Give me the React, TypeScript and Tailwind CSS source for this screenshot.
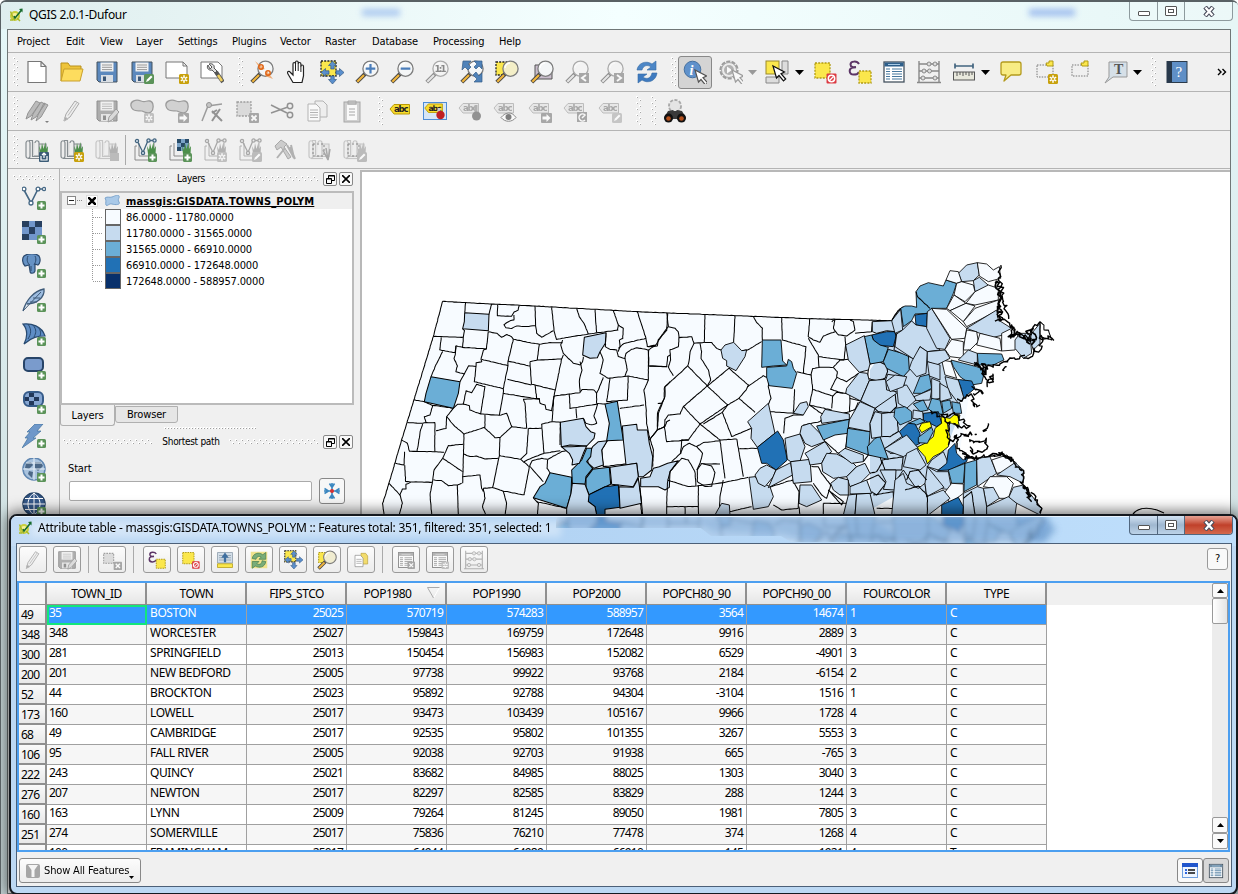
import React from "react";

const N = "#f7fbff";
const L = "#c6dbef";
const M = "#6baed6";
const D = "#2171b5";
const Y = "#ffff00";

const UI = "[font-family:'DejaVu_Sans_Condensed','DejaVu_Sans',sans-serif] [font-stretch:semi-condensed] text-[11px] leading-[14px] tracking-[-0.15px] whitespace-pre";

/* ---------- icon parts ---------- */

type IconProps = { children: React.ReactNode; dim?: boolean; size?: number };
function Ic({ children, dim, size = 24 }: IconProps) {
  return (
    <svg width={size} height={size} viewBox="0 0 24 24" fill="none" className={dim ? "shrink-0 grayscale opacity-60" : "shrink-0"}>
      {children}
    </svg>
  );
}

const Plus = () => (
  <g>
    <rect x="15" y="15" width="9" height="9" rx="1.5" fill="#5b9359" />
    <path d="M19.5 16.5v6M16.5 19.5h6" stroke="#fff" strokeWidth="2" />
  </g>
);
const Star = () => (
  <g>
    <rect x="14" y="14" width="10" height="10" rx="1.5" fill="#c8a10c" />
    <path d="M19 15.3v7.4M15.8 17.2l6.4 3.6M22.2 17.2l-6.4 3.6" stroke="#fff" strokeWidth="1.5" />
    <circle cx="19" cy="19" r="1.1" fill="#c8a10c" />
  </g>
);
const Cross = () => (
  <g>
    <rect x="14" y="14" width="10" height="10" rx="1" fill="#777" />
    <path d="M16.5 16.5l5 5M21.5 16.5l-5 5" stroke="#fff" strokeWidth="1.8" />
  </g>
);
const Arr = () => (
  <g>
    <rect x="13" y="14" width="11" height="10" rx="1" fill="#777" />
    <path d="M14.5 17.5h4v-2.5l4 4-4 4v-2.5h-4z" fill="#fff" />
  </g>
);
const Edit = ({ c = "#5b9359" }: { c?: string }) => (
  <g>
    <rect x="14" y="14" width="10" height="10" rx="1.5" fill={c} />
    <path d="M16 22l1-2.500 4-4 1.500 1.500-4 4z" fill="#fff" />
  </g>
);
const Mag = ({ fill = "#f4f6f7", handle = "#f2b63c" }: { fill?: string; handle?: string }) => (
  <g>
    <path d="M10.500 13.500L1.800 22.200" stroke="#444" strokeWidth="4" />
    <path d="M9 15L2.300 21.700" stroke={handle} strokeWidth="2.200" />
    <circle cx="15.500" cy="8.700" r="7.600" fill={fill} stroke="#7d7d7d" strokeWidth="1.300" />
    <path d="M10 8a5.500 5.500 0 0 1 5-5" stroke="#fff" strokeWidth="1.500" />
  </g>
);
const Cursor = ({ x = 10, y = 9, c = "#111" }: { x?: number; y?: number; c?: string }) => (
  <path transform={`translate(${x} ${y})`} d="M0 0l3.500 12 2.500-2.500 4.500 5.500 2.200-2-4.700-5.300 3.500-1.700z" fill="#fff" stroke={c} strokeWidth="1.200" />
);
const Floppy = () => (
  <g>
    <path d="M2 2h20v20H4l-2-2z" fill="#5b88bd" stroke="#44525f" />
    <rect x="5.500" y="2.500" width="13" height="9" fill="#f1f1f1" />
    <path d="M7 5h10M7 7.300h10M7 9.600h10" stroke="#999" />
    <rect x="6" y="15" width="12" height="7" fill="#d9dee4" />
    <rect x="8" y="16.500" width="3" height="4.500" fill="#3b5777" />
  </g>
);
const Blob = () => <path d="M1 7C0 2 6 0 11 2s5-1 9 0 4 9 1 11-7 0-9-1-10 2-11-5z" fill="#bdbdbd" stroke="#666" strokeWidth="1.300" />;
const Tag = ({ y = false }: { y?: boolean }) => (
  <g>
    <path d="M2 10l4-4.500h15.500v9.500H6z" fill={y ? "#f7dc2c" : "#e2e2e2"} stroke={y ? "#b99a06" : "#9a9a9a"} />
    <text x="6" y="13" fontSize="8.500" fontWeight="700" fontFamily="DejaVu Sans" textLength="14.500" fill={y ? "#222" : "#777"}>abc</text>
  </g>
);
const Frames = ({ dim }: { dim?: boolean }) => (
  <g stroke={dim ? "#aaa" : "#858c90"} strokeWidth="1.200">
    <path d="M4 2.500h3.500v16H21V6h-7" fill="#e0e0e0" />
    <path d="M1 5c0-3 4-3 4 0v13c0 3-4 3-4 0zM10 5c0-3 4-3 4 0v13H9" fill="#ededed" />
    <path d="M3 20.500h12" />
  </g>
);
const Grass = ({ c = "#4c8f4a" }: { c?: string }) => (
  <path d="M15 16l-1-8 2 4 1-7 1.500 6 2-7 .5 7 2-3-.5 8z" fill={c} />
);
const Layer = ({ children }: { children?: React.ReactNode }) => (
  <g>
    <path d="M6 5v13h15V5M4 8H2v14h14" stroke="#8a8a8a" />
    {children}
  </g>
);
const Vee = ({ c = "#42647f" }: { c?: string }) => (
  <g stroke={c} strokeWidth="1.300">
    <path d="M5 4.500l5 10 5-12M16.500 2.500h4" />
    <g fill="#dfe9f2">
      <circle cx="4" cy="3" r="1.600" />
      <circle cx="10" cy="15" r="1.600" />
      <circle cx="15.500" cy="2.500" r="1.600" />
      <circle cx="21.500" cy="2.500" r="1.600" />
    </g>
  </g>
);
const Dotted = ({ x = 1, y = 3, s = 15, f = "#fbe74c", c = "#b19b14" }: { x?: number; y?: number; s?: number; f?: string; c?: string }) => (
  <rect x={x} y={y} width={s} height={s} fill={f} stroke={c} strokeWidth="1.300" strokeDasharray="2 1.200" />
);
const Deny = () => (
  <g>
    <rect x="13.500" y="13.500" width="10" height="10" rx="1" fill="#dc3a42" />
    <circle cx="18.500" cy="18.500" r="3.200" stroke="#fff" strokeWidth="1.500" />
    <path d="M20.500 16.500l-4 4" stroke="#fff" strokeWidth="1.300" />
  </g>
);
const Abacus = () => (
  <g stroke="#888">
    <path d="M2 1v21M22 1v21M0 22.500h24M2 4h20M2 11h20M2 18h20" strokeWidth="1.400" />
    <g fill="#ddd">
      <circle cx="12" cy="4" r="2" /><circle cx="18" cy="4" r="2" />
      <circle cx="7" cy="11" r="2" /><circle cx="12.500" cy="11" r="2" />
      <circle cx="6" cy="18" r="2" /><circle cx="18" cy="18" r="2" />
    </g>
  </g>
);
const Eps = () => <path d="M11 4C9 .500 2.500 1 2.500 4.500c0 2.500 3 3 5.500 2.700-3 0-6.500.500-6.300 4 .300 4.500 7.300 4.300 9.300.7" stroke="#5c3566" strokeWidth="2" />;
const Note = () => <path d="M4 2h16q2 0 2 2v9q0 2-2 2h-8l-7 6 2-6H4q-2 0-2-2V4q0-2 2-2z" fill="#f8ec84" stroke="#b39a1d" strokeWidth="1.300" strokeLinejoin="round" />;
const Arrows4 = ({ cx = 12, cy = 12 }: { cx?: number; cy?: number }) => (
  <g transform={`translate(${cx} ${cy})`} fill="#5a8fcd" stroke="#375a85" strokeWidth=".7">
    {[0, 90, 180, 270].map((r) => (
      <path key={r} transform={`rotate(${r})`} d="M-1.700-3.500v-3.500h-2.300L0-11.500 4-7h-2.300v3.500z" />
    ))}
  </g>
);
const Docs = () => (
  <g stroke="#8b8b8b" fill="#eee">
    <path d="M10 2h8l4 4v12H10z" />
    <path d="M3 5h8l4 4v13H3z" fill="#fff" />
    <path d="M5 11h8M5 13.500h8M5 16h8M5 18.500h8" />
  </g>
);
const Pencil = () => (
  <g>
    <path d="M4 22l2-7L15 2l4 2.500L10 18z" fill="#ececec" stroke="#777" />
    <path d="M8 16.500L17 3.500M4 22l1-4 3 2z" stroke="#999" fill="#777" />
  </g>
);
const TableGlyph = ({ c = "#2d5f8b" }: { c?: string }) => (
  <g>
    <rect x="2" y="2" width="20" height="20" fill="#fff" stroke="#44525f" strokeWidth="1.300" />
    <path d="M2.500 4.500h19" stroke={c} strokeWidth="4" />
    <path d="M6 4.500h12" stroke="#a9cbe6" />
    <path d="M4 9h4M10 9h10M4 11.500h4M10 11.500h10M4 14h4M10 14h10M4 16.500h4M10 16.500h10M4 19h4M10 19h10" stroke="#47789e" strokeWidth="1.200" />
  </g>
);
const Hammer = () => (
  <g>
    <path d="M2 8l6-6 6 4-3 3 7 10-3 2L8 9l-4 3z" fill="#b5b5b5" stroke="#777" />
    <path d="M12 10L4 20M14 7l7 13M18 7l3 13M17 9l5 12" stroke="#888" strokeWidth="2" />
  </g>
);

function Logo() {
  return (
    <svg width="14" height="14" viewBox="0 0 14 14" fill="none" className="shrink-0">
      <circle cx="6" cy="8" r="4" fill="#f6f09a" stroke="#c9cf3d" strokeWidth="2" />
      <path d="M1.500 3.500l4 9M8 10l3 3M1 12h3" stroke="#a9b92a" strokeWidth="1.500" />
      <path d="M5 8l1 2 7-8.500" stroke="#176b2d" strokeWidth="1.600" />
      <path d="M13.500.5V4.500L10 1z" fill="#176b2d" />
    </svg>
  );
}

/* ---------- toolbar helpers ---------- */

function Grip() {
  return (
    <svg width="6" height="30" viewBox="0 0 6 30" className="shrink-0">
      {Array.from({ length: 10 }, (_, i) => (
        <g key={i}>
          <rect x={i % 2 ? 3 : 0} y={i * 3} width="2" height="2" fill="#fff" />
          <rect x={i % 2 ? 4 : 1} y={i * 3 + 1} width="1" height="1" fill="#a8a8a8" />
        </g>
      ))}
    </svg>
  );
}
function HGrip({ n, flat = false }: { n: number; flat?: boolean }) {
  return (
    <svg width={n * 3} height="6" className="shrink-0">
      {Array.from({ length: n }, (_, i) => (
        <g key={i}>
          <rect x={i * 3} y={!flat && i % 2 ? 3 : 0} width="2" height="2" fill="#fff" />
          <rect x={i * 3 + 1} y={!flat && i % 2 ? 4 : 1} width="1" height="1" fill="#a0a0a0" />
        </g>
      ))}
    </svg>
  );
}
function Slot({ children, w = "w-[35px]" }: { children?: React.ReactNode; w?: string }) {
  return <div className={`${w} flex h-[34px] shrink-0 items-center justify-center`}>{children}</div>;
}
function Down({ dim = false }: { dim?: boolean }) {
  return (
    <svg width="9" height="5" className="shrink-0">
      <path d="M0 0h9L4.500 5z" fill={dim ? "#999" : "#000"} />
    </svg>
  );
}

function Toolbar1() {
  return (
    <div className="flex h-[39px] items-center border-b border-[#b4b4b4] pl-[5px]">
      <Grip />
      <Slot><Ic><path d="M3 1.500h13l5 5v16H3zM16 1.500v5h5" fill="#fff" stroke="#777" strokeWidth="1.200" /></Ic></Slot>
      <Slot><Ic><path d="M1 21V3h7l2 3h11v4" fill="#eec43b" stroke="#b8901a" /><path d="M1 21L4 9h19l-3 12z" fill="#fddc5e" stroke="#c9a02c" /></Ic></Slot>
      <Slot><Ic><Floppy /></Ic></Slot>
      <Slot><Ic><Floppy /><Edit /></Ic></Slot>
      <Slot><Ic><path d="M1 2h17l4 4v12H1zM18 2v4h4" fill="#fff" stroke="#777" /><Star /></Ic></Slot>
      <Slot><Ic><path d="M1 2h17l4 4v12H1z" fill="#fff" stroke="#777" /><path d="M8 5c-2 3 1 6 4 5l3 3 2-2-3-3c1-3-2-5-5-4l3 3-2 2z" fill="#ddd" stroke="#555" /><path d="M16 12l7 10" stroke="#555" strokeWidth="4" /><path d="M18 15l4 6" stroke="#f0d060" strokeWidth="2.500" /></Ic></Slot>
      <div className="ml-[9px] flex"><Grip /></div>
      <Slot><Ic><Mag /><path d="M5 1l10 8-4 1zM23 19l-8-3 2-5z" fill="#f0a060" opacity=".8" /><circle cx="11" cy="7" r="2.200" stroke="#e06414" strokeWidth="1.500" /><circle cx="18" cy="13" r="2.200" stroke="#e06414" strokeWidth="1.500" /></Ic></Slot>
      <Slot><Ic><path d="M8 22.500L3 14c-1.500-2.500 1-3.500 2.500-1.500L8 15V4c0-2 2.500-2 2.500 0V2.500c0-2 2.700-2 2.700 0V4c0-2 2.700-2 2.700 0v2.500c0-2 2.600-2 2.600 0V16l-1.500 6.500z" fill="#fff" stroke="#222" strokeWidth="1.200" /><path d="M10.500 4v7M13.200 4v7M15.900 6v6" stroke="#222" /></Ic></Slot>
      <Slot><Ic><Dotted x={1} y={1} s={15} c="#222" /><Arrows4 cx={12.500} cy={12.500} /></Ic></Slot>
      <Slot><Ic><Mag /><path d="M15.500 4v9.500M10.700 8.700h9.600" stroke="#4a7dba" strokeWidth="2.200" /></Ic></Slot>
      <Slot><Ic><Mag /><path d="M10.700 8.700h9.600" stroke="#4a7dba" strokeWidth="2.200" /></Ic></Slot>
      <Slot><Ic dim><Mag handle="#ddd" /><text x="9.500" y="12" fontSize="9" fontWeight="700" fontFamily="DejaVu Sans" textLength="12" fill="#444">1:1</text></Ic></Slot>
      <Slot><Ic><Mag /><path d="M3 1h8L8 4l3 3-3 3-3-3-3 3zM22 1v8l-3-3-3 3-2-2 3-3-3-3zM22 22h-8l3-3-4-4 3-3 3 4 3-3z" fill="#4f82b9" stroke="#355d88" strokeWidth=".7" /></Ic></Slot>
      <Slot><Ic><Dotted x={1} y={2} s={13} c="#222" /><Mag fill="#f4efc8" /></Ic></Slot>
      <Slot><Ic><path d="M5 5h17v14H5z" fill="#c9bdcc" stroke="#555" /><Mag /></Ic></Slot>
      <Slot><Ic dim><Mag handle="#ddd" /><rect x="14" y="13" width="10" height="10" fill="#777" /><path d="M21 15l-4 3 4 3" stroke="#fff" strokeWidth="2" /></Ic></Slot>
      <Slot><Ic dim><Mag handle="#ddd" /><rect x="14" y="13" width="10" height="10" fill="#777" /><path d="M17 15l4 3-4 3" stroke="#fff" strokeWidth="2" /></Ic></Slot>
      <Slot><Ic><path d="M2 10C3 3 11 0 17 4l4-3v9h-9l4-3c-4-3-8-1-9 3z" fill="#4d87c7" stroke="#386ca5" strokeWidth=".6" /><path d="M22 13c-1 8-9 11-15 7l-4 3v-9h9l-4 3c4 3 8 1 9-4z" fill="#3f7bc0" stroke="#386ca5" strokeWidth=".6" /></Ic></Slot>
      <div className="ml-[7px] mr-px flex"><Grip /></div>
      <div className="flex h-[33px] w-[34px] shrink-0 items-center justify-center rounded-[3px] border border-[#888] bg-[#d4d4d4]">
        <Ic><circle cx="9.500" cy="9.500" r="8.300" fill="#5f91cb" stroke="#436f9f" /><text x="6.500" y="15" fontSize="14" fontStyle="italic" fontWeight="700" fontFamily="Liberation Serif" fill="#fff">i</text><Cursor x={12} y={10} c="#555" /></Ic>
      </div>
      <div className="ml-[2px] flex"><Slot w="w-[34px]"><Ic dim><circle cx="10" cy="10" r="8.500" fill="#e8e8e8" stroke="#666" strokeWidth="2.200" strokeDasharray="4 1.300" /><circle cx="10" cy="10" r="7.500" fill="#e8e8e8" stroke="#777" /><circle cx="10" cy="10" r="5" fill="#888" /><path d="M8 6.500l5 3.500-5 3.500z" fill="#fff" /><Cursor x={13} y={10} c="#666" /></Ic></Slot></div>
      <Down dim />
      <div className="ml-[7px] flex"><Slot w="w-[26px]"><Ic><rect x="1" y="1" width="13" height="13" fill="#fbe74c" stroke="#9b8a2a" /><path d="M17 1h6v13h-6zM1 17h13v6H1z" fill="#ddd" stroke="#888" /><Cursor x={8} y={6} /></Ic></Slot></div>
      <div className="ml-[5px] flex"><Down /></div>
      <div className="ml-[3px] flex"><Slot><Ic><Dotted x={2} y={3} s={15} /><Deny /></Ic></Slot></div>
      <Slot><Ic><Eps /><Dotted x={11} y={11} s={12} /></Ic></Slot>
      <div className="ml-[-1px] flex"><Slot><Ic><TableGlyph /></Ic></Slot></div>
      <Slot><Ic><Abacus /></Ic></Slot>
      <Slot><Ic><path d="M3 6h18M3 3.500v5M21 3.500v5" stroke="#42647f" strokeWidth="1.700" /><rect x="1.500" y="12" width="21" height="8" fill="#e8e8dc" stroke="#555" /><path d="M5 12v4M8 12v3M11 12v4M14 12v3M17 12v4M20 12v3" stroke="#555" /></Ic></Slot>
      <Down />
      <div className="ml-[3px] flex"><Slot><Ic><Note /></Ic></Slot></div>
      <Slot><Ic><rect x="3" y="5" width="16" height="12" stroke="#777" strokeDasharray="1.500 1.200" /><path d="M12 3h3V1h4v5h-6z" fill="#fbe74c" stroke="#b19b14" /><Star /></Ic></Slot>
      <Slot><Ic><rect x="3" y="5" width="16" height="11" stroke="#777" strokeDasharray="1.500 1.200" /><path d="M12 3h3V1h4v5h-6z" fill="#fbe74c" stroke="#b19b14" /></Ic></Slot>
      <Slot><Ic><path d="M5 2h18v15H9l-8 6 4-6z" fill="#d6e0e8" stroke="#999" /><text x="10" y="14" fontSize="14" fontWeight="700" fontFamily="Liberation Serif" fill="#555">T</text></Ic></Slot>
      <Down />
      <div className="ml-[9px] mr-[2px] flex"><Grip /></div>
      <Slot w="w-[35px]"><Ic><rect x="2" y="1.500" width="20" height="21" fill="#5f8fc6" stroke="#2b3a4a" /><path d="M2 1.500h5v21H2z" fill="#28394c" /><text x="10.500" y="17" fontSize="15" fontFamily="Liberation Serif" fill="#fff">?</text></Ic></Slot>
      <svg width="10" height="10" viewBox="0 0 10 10" className="ml-auto mr-[3px] shrink-0"><path d="M1 2l3 3-3 3M5.500 2l3 3-3 3" stroke="#000" strokeWidth="1.400" fill="none" /></svg>
    </div>
  );
}

function Toolbar2() {
  return (
    <div className="flex h-[39px] items-center border-b border-[#b4b4b4] pl-[5px]">
      <Grip />
      <Slot><Ic dim><path d="M1 20l2-6L11 2l4 2-9 13zM6 21l2-6 8-12 4 2-9 13zM11 22l2-6 6-12 4 2-7 12z" fill="#999" stroke="#555" /><path d="M20 22h4l-2 2z" fill="#333" /></Ic></Slot>
      <Slot><Ic dim><Pencil /></Ic></Slot>
      <Slot><Ic dim><Floppy /><path d="M13 23l1-5 7-8 3 3-7 8z" fill="#ccc" stroke="#666" /></Ic></Slot>
      <Slot><Ic dim><Blob /><Star /></Ic></Slot>
      <Slot><Ic dim><Blob /><Arr /></Ic></Slot>
      <Slot><Ic dim><path d="M2 22L8 7l14-2" stroke="#666" strokeWidth="1.500" /><circle cx="9" cy="6" r="2.500" fill="#aaa" stroke="#555" /><path d="M12 12l10 10M20 10l-8 12M12 14l5-3" stroke="#555" strokeWidth="2" /></Ic></Slot>
      <Slot><Ic dim><Dotted x={2} y={3} s={14} f="#ccc" c="#666" /><Cross /></Ic></Slot>
      <Slot><Ic dim><path d="M1 6l16 8M1 14l17-6" stroke="#555" strokeWidth="1.500" /><circle cx="20" cy="7" r="2.700" stroke="#555" strokeWidth="1.500" /><circle cx="20" cy="16" r="2.700" stroke="#555" strokeWidth="1.500" /></Ic></Slot>
      <Slot><Ic dim><Docs /></Ic></Slot>
      <Slot><Ic dim><rect x="4" y="3" width="16" height="20" fill="#bbb" stroke="#777" /><rect x="7" y="6" width="10" height="15" fill="#fff" /><path d="M8 2h8v3H8zM9 10h6M9 13h6M9 16h6" stroke="#777" /></Ic></Slot>
      <div className="ml-[9px] mr-[-2px] flex"><Grip /></div>
      <Slot><Ic><Tag y /></Ic></Slot>
      <Slot>
        <Ic><rect x=".5" y="3.500" width="23" height="17" fill="#d7e6f6" stroke="#4d8cd6" /><g transform="translate(0 0) scale(.9)"><Tag y /></g><path d="M16 9v6" stroke="#ccc" strokeWidth="3" /><circle cx="17.500" cy="16" r="4.200" fill="#c01f24" /></Ic>
      </Slot>
      <Slot><Ic dim><g transform="translate(-1 -1)"><Tag /></g><path d="M18 6v8" stroke="#888" strokeWidth="3" /><circle cx="18.500" cy="17" r="4.500" fill="#555" /></Ic></Slot>
      <Slot><Ic dim><g transform="translate(-1 -1)"><Tag /></g><path d="M8 18.500c5-6 11-6 15 0-4 5-11 5-15 0z" fill="#fff" stroke="#444" /><circle cx="15.500" cy="18" r="3" fill="#333" /></Ic></Slot>
      <Slot><Ic dim><g transform="translate(-1 -1)"><Tag /></g><Arr /></Ic></Slot>
      <Slot><Ic dim><g transform="translate(-1 -1)"><Tag /></g><rect x="14" y="13" width="10" height="10" fill="#777" /><path d="M22 21a3.500 3.500 0 1 1 0-5l-3 3" stroke="#fff" strokeWidth="1.500" /></Ic></Slot>
      <Slot><Ic dim><g transform="translate(-1 -1)"><Tag /></g><Edit c="#aaa" /></Ic></Slot>
      <div className="ml-[9px] flex"><Grip /></div>
      <div className="ml-[9px] flex"><Grip /></div>
      <Slot>
        <Ic><circle cx="12" cy="7" r="6" fill="#ddd" stroke="#aaa" strokeWidth="2" strokeDasharray="3 1.500" /><circle cx="12" cy="7" r="5" fill="#e4e4e4" /><path d="M5 12l5-1 1 1h2l1-1 5 1 4 7-4 4-5-3h-4l-5 3-4-4z" fill="#3a3a3a" /><circle cx="5.500" cy="19" r="4.500" fill="#111" /><circle cx="18.500" cy="19" r="4.500" fill="#111" /><circle cx="5.500" cy="19.500" r="2.300" fill="#b5511c" /><circle cx="18.500" cy="19.500" r="2.300" fill="#b5511c" /></Ic>
      </Slot>
    </div>
  );
}

function Toolbar3() {
  return (
    <div className="flex h-[38px] items-center border-b border-[#b4b4b4] pl-[5px]">
      <Grip />
      <Slot><Ic><Frames /><Grass /><rect x="14" y="14" width="10" height="10" rx="1" fill="#3b5c77" /><path d="M16 18v4h6v-4M19 20v-5M17 17l2-2 2 2" stroke="#fff" strokeWidth="1.200" /></Ic></Slot>
      <Slot><Ic><Frames /><Grass /><Star /></Ic></Slot>
      <Slot><Ic dim><Frames dim /><Grass c="#888" /><rect x="15" y="15" width="9" height="8" fill="#999" /></Ic></Slot>
      <div className="mx-px h-[30px] w-px shrink-0 bg-[#aaa]" />
      <Slot><Ic><Layer><Vee /><Grass /></Layer><Plus /></Ic></Slot>
      <Slot><Ic><Layer><rect x="9" y="1" width="12" height="12" fill="#7ba3c7" /><path d="M9 1h4v4H9zM17 1h4v4h-4zM13 5h4v4h-4zM9 9h4v4H9z" fill="#284b68" /><Grass /></Layer><Plus /></Ic></Slot>
      <Slot><Ic dim><Layer><Vee c="#777" /><Grass c="#888" /></Layer><Star /></Ic></Slot>
      <Slot><Ic dim><Layer><Vee c="#777" /><Grass c="#888" /></Layer><Edit c="#999" /></Ic></Slot>
      <Slot><Ic dim><Hammer /></Ic></Slot>
      <Slot><Ic dim><Frames dim /><rect x="5" y="6" width="11" height="12" stroke="#444" strokeDasharray="2 2" /><path d="M15 12l5 10M18 10l2 12M22 11l-2 11" stroke="#777" strokeWidth="1.500" /></Ic></Slot>
      <Slot><Ic dim><Frames dim /><rect x="5" y="6" width="11" height="12" stroke="#444" strokeDasharray="2 2" /><Grass c="#999" /><Edit c="#999" /></Ic></Slot>
    </div>
  );
}

function SideBar() {
  const icons: React.ReactNode[] = [
    <g transform="translate(-1 0)" key="v"><path d="M3 4l7 13 7-14h5" stroke="#466885" strokeWidth="1.600" /><g fill="#fff" stroke="#466885" strokeWidth="1.300"><circle cx="3" cy="3" r="1.900" /><circle cx="10" cy="17" r="2" /><circle cx="17" cy="3" r="1.900" /><circle cx="23" cy="3" r="1.600" /></g></g>,
    <g key="r"><rect x="0" y="1" width="20" height="19" fill="#7196cb" /><path d="M0 1h7v6H0zM13 1h7v6h-7zM7 7h6v7H7zM0 14h7v6H0z" fill="#273f5f" /></g>,
    <g key="p"><path d="M2 2c4-3 12-3 15 0 2 3 1 8-1 9l-3-1v7c-1 3-5 3-5 0l-1-6-4 1C0 9 0 4 2 2z" fill="#6692c4" stroke="#2c4a6e" strokeWidth="1.200" /><path d="M6 2c-2 4 0 8 2 9M13 2c2 4 0 7-1 9M9 12v5" stroke="#2c4a6e" /></g>,
    <g key="f"><path d="M1 23C4 12 12 3 22 1c1 8-7 15-17 15" fill="#9dbce0" stroke="#3e5a78" strokeWidth="1.300" /><path d="M1 23L19 4M8 14h7M11 10h7" stroke="#3e5a78" /></g>,
    <g key="m"><path d="M1 2c8-1 19 2 22 12-7 0-13 1-21 8C6 14 6 8 1 2z" fill="#5e8dc5" stroke="#284a70" strokeWidth="1.200" /><path d="M6 2c4 6 3 10 0 15M11 3c4 5 3 8 1 12M16 5c3 4 3 6 2 9" stroke="#284a70" /></g>,
    <rect key="o" x="2" y="2" width="19" height="13" rx="4" fill="#7a9bcc" stroke="#274468" strokeWidth="2" />,
    <g key="q"><rect x="2" y="2" width="19" height="14" rx="5" fill="#86a6d2" stroke="#365b89" strokeWidth="2" /><path d="M7 3h5v4H7zM3 7h4v4H3zM12 7h5v4h-5zM7 11h5v4H7z" fill="#22385a" /></g>,
    <path key="l" d="M13 0h8l-6 7h4l-8 7h3L0 24l6-10H3l5-6H5z" fill="#6e97c9" stroke="#44729f" strokeWidth=".7" />,
    <g key="w"><circle cx="12" cy="11" r="11" fill="#a9c3de" stroke="#5f86b1" strokeWidth="1.500" /><path d="M4 5l5-1 2 3-4 4-4-1zM13 4h6l2 4-5 5-3-3zM7 13l4 1-1 6-4-4zM15 14l3 1-2 4z" fill="#4c6887" /><path d="M1 11h22M12 0v22M4 5h16" stroke="#e6eef6" /></g>,
    <g key="g"><circle cx="12" cy="12" r="11" fill="#36598a" stroke="#274468" strokeWidth="1.500" /><path d="M1 12h22M12 1v22M3 6.500h18M3 17.500h18M12 1c-8 6-8 16 0 22M12 1c8 6 8 16 0 22" stroke="#fff" /></g>,
  ];
  return (
    <div className="flex w-[52px] shrink-0 flex-col items-center border-r border-[#b4b4b4]">
      <div className="mt-[6px] flex h-[6px]"><HGrip n={14} /></div>
      {icons.map((ic, i) => (
        <div key={i} className="flex h-[34px] shrink-0 items-center">
          <Ic>{ic}<Plus /></Ic>
        </div>
      ))}
    </div>
  );
}

function DockTitle({ text, n }: { text: string; n: number }) {
  return (
    <div className="flex h-[16px] shrink-0 items-center pl-[3px]">
      <HGrip n={n} />
      <div className="flex-1 text-center whitespace-pre [font-family:'DejaVu_Sans_Condensed','DejaVu_Sans',sans-serif] [font-stretch:semi-condensed] text-[10px] leading-[14px] tracking-[-0.3px]">{text}</div>
      <HGrip n={n} />
      <div className="ml-[4px] mr-[2px] flex h-[14px] w-[14px] shrink-0 items-center justify-center rounded-[2px] border border-[#888] bg-[#f8f8f8]">
        <svg width="9" height="9" fill="none" stroke="#000"><path d="M2.500 3V.5h6v5H6M2.500 1h6" /><path d="M.5 3.500h5v5h-5zM.5 4h5" /></svg>
      </div>
      <div className="mr-[4px] flex h-[14px] w-[14px] shrink-0 items-center justify-center rounded-[2px] border border-[#888] bg-[#f8f8f8]">
        <svg width="8" height="8" stroke="#000" strokeWidth="1.600"><path d="M0 0l8 8M8 0L0 8" /></svg>
      </div>
    </div>
  );
}

const classes: [string, string][] = [
  ["bg-[#f7fbff]", "86.0000 - 11780.0000"],
  ["bg-[#c6dbef]", "11780.0000 - 31565.0000"],
  ["bg-[#6baed6]", "31565.0000 - 66910.0000"],
  ["bg-[#2171b5]", "66910.0000 - 172648.0000"],
  ["bg-[#08306b]", "172648.0000 - 588957.0000"],
];

function Docks() {
  return (
    <div className="flex w-[297px] shrink-0 flex-col pt-[2px]">
      <DockTitle text="Layers" n={36} />
      <div className="mt-[4px] mr-[3px] h-[214px] shrink-0 border-2 border-[#bbb] bg-white">
        <div className="flex h-[16px] items-center bg-[#efefef] pl-[5px]">
          <svg width="16" height="11" fill="none" stroke="#888"><rect x=".5" y=".5" width="8" height="8" fill="#fff" /><path d="M2 4.500h5" stroke="#222" /><path d="M10 4.500h6" strokeDasharray="1 1" /></svg>
          <div className="ml-[3px] flex h-[12px] w-[12px] items-center justify-center border border-[#ddd] bg-white">
            <svg width="8" height="8" stroke="#000" strokeWidth="2.500"><path d="M0 0l8 8M8 0L0 8" /></svg>
          </div>
          <svg width="16" height="12" viewBox="0 0 16 12" className="ml-[6px]"><path d="M1 3c3-2 4 0 7-1s6-3 7-1-2 3 0 6-4 3-7 2-5 3-6 1 1-4-1-7z" fill="#a9c9e8" stroke="#7ba3cb" /></svg>
          <span className="ml-[6px] whitespace-pre pt-px [font-family:'DejaVu_Sans_Condensed','DejaVu_Sans',sans-serif] [font-stretch:semi-condensed] text-[11px] font-bold leading-[14px] tracking-[0.15px] underline">massgis:GISDATA.TOWNS_POLYM</span>
        </div>
        {classes.map(([bg, label], i) => (
          <div key={label} className="flex h-[16px] items-center pl-[30px]">
            <svg width="11" height="16" stroke="#999" fill="none"><path d={i === 4 ? "M.5 0V8" : "M.5 0V16"} strokeDasharray="1 1" /><path d="M1 8.500h9" strokeDasharray="1 1" /></svg>
            <div className={`${bg} ml-[2px] h-[16px] w-[16px] shrink-0 border border-[#666]`} />
            <span className={`${UI} ml-[5px] pt-px`}>{label}</span>
          </div>
        ))}
      </div>
      <div className="flex h-[21px] shrink-0 items-start">
        <div className={`${UI} flex h-[21px] w-[55px] items-center justify-center rounded-b-[3px] border border-t-0 border-[#b0b0b0] bg-[#f0f0f0] pt-px`}>Layers</div>
        <div className={`${UI} mt-px flex h-[17px] w-[63px] items-center justify-center rounded-b-[3px] border border-[#b0b0b0] bg-[#e6e6e6] pt-px`}>Browser</div>
      </div>
      <div className="flex h-[8px] shrink-0 items-center justify-center pl-[4px]"><HGrip n={31} flat /></div>
      <DockTitle text="Shortest path" n={30} />
      <div className={`${UI} mt-[12px] ml-[8px] h-[14px]`}>Start</div>
      <div className="mt-[2px] flex shrink-0 items-center pl-[9px]">
        <div className="h-[20px] w-[243px] rounded-[2px] border border-[#aaa] bg-white" />
        <div className="ml-[7px] flex h-[26px] w-[26px] items-center justify-center rounded-[3px] border border-[#888] bg-[#f7f7f7]">
          <svg width="16" height="16" stroke="#3b87c0" strokeWidth="1.600"><path d="M8 0v16M0 8h16M5.500.5l2.500 4 2.500-4M5.500 15.500l2.500-4 2.500 4M.5 5.500l4 2.500-4 2.500M15.500 5.500l-4 2.500 4 2.500" fill="none" /><circle cx="8" cy="8" r="2" fill="#d93030" stroke="none" /></svg>
        </div>
      </div>
    </div>
  );
}

/* ---------- map ---------- */

type Area = [string, string];

const westLines = [
  "218,34 190,139 132,330 95,450 57,580 38,640 42,675",
  "218,34 287,38 365,42 495,48 545,51 620,55 675,58 730,61 802,65 1150,79 1320,86 1565,92",
  "287,38 284,68", "278,116 283,122 280,142 278,172 349,177 355,125", "365,42 357,73",
  "383,44 382,77 425,79 432,66 444,60 448,46", "432,75 432,90 420,92 402,104 408,113 425,115 440,108 470,110 495,107",
  "355,125 380,130 395,142 410,134 425,140 430,148 508,163", "495,48 497,107 500,130 515,142 550,122",
  "545,51 552,122 559,148 655,132 745,120", "620,55 628,80 642,100 655,132", "675,58 677,90 680,127", "730,61 745,105 742,120",
  "802,65 828,145 762,160 745,175", "745,105 760,115 758,145 748,150 750,170 745,185", "828,145 832,170 858,165 870,145 890,120 893,70",
  "190,139 280,142", "214,142 209,180 255,188 258,168 278,172", "218,184 200,220 183,260",
  "258,168 256,195 252,205 262,228 258,245 283,252 296,227 318,230 318,218 335,215 333,208 340,180 349,177",
  "335,208 414,227", "318,230 313,275 400,296", "283,252 270,275", "430,148 414,213 414,227 400,296", "414,213 480,228",
  "508,163 502,210", "508,163 540,158 578,158", "480,215 502,210 575,207 556,300 484,282 480,215", "412,268 484,285", "400,296 400,310 508,328",
  "400,310 388,376 332,372 345,290 320,283 305,308 288,303 280,342 298,347 300,360 332,372",
  "345,375 345,415 362,430 375,443 390,443 425,410 410,370 388,376", "425,410 470,415", "132,330 163,335 188,346 250,355",
  "188,346 180,375 163,380 168,398", "250,355 230,380 228,415 198,422", "250,355 262,343 280,342", "230,380 250,405 282,432 345,412",
  "112,398 158,400 163,398 195,398 194,485 222,487", "158,402 150,425 147,450 141,485", "95,450 112,460 118,484 194,485",
  "104,485 102,525 76,520", "104,525 107,575 187,577 192,540 218,505 235,467 280,463", "282,432 280,500 278,580",
  "218,505 278,545", "280,492 300,500 320,498 345,507 385,505", "390,443 388,497 452,508 470,490 475,415", "388,497 368,593 340,595",
  "452,508 478,530 462,615 400,603 368,593", "470,415 465,340 460,328 508,325 510,340 525,345 528,358 545,362 552,318",
  "495,285 500,325", "552,318 556,300", "552,318 598,312 630,308 637,298 672,300 680,310", "578,150 572,165 580,190 595,205 610,220 630,225 638,215 640,200",
  "575,207 580,195", "630,215 636,240 628,270 630,305", "708,128 706,170 720,178 740,180 745,200 765,205 768,190 785,178 800,173 835,180 835,270 775,258",
  "690,185 700,210 690,250 715,265 775,258 772,330 710,335 720,265", "700,262 685,300 680,310 680,340 705,342", "765,205 772,240 765,258",
  "598,312 600,355 683,342", "546,395 552,318", "546,395 515,402 522,490 571,482", "546,395 571,397 570,465", "475,415 515,415", "522,490 475,508 462,515",
  "618,355 620,385", "640,385 648,400 665,405 680,400 672,378 683,342", "750,355 822,345", "835,270 822,300 828,350 830,400 838,440 850,480 848,530",
  "838,228 890,230 893,200 900,195", "835,180 858,165", "862,420 862,370 875,340 885,320 885,290 900,275", "838,450 862,420 885,410 890,395 900,390",
  "712,452 695,480 700,530 768,522", "533,508 575,485 604,478", "533,508 531,535 540,548", "478,530 486,512 515,505 533,508", "480,530 520,575",
  "490,623 505,640 502,675", "400,603 410,640 405,675", "340,595 345,625 337,650 348,675", "278,560 330,555 335,595 340,605", "262,585 275,580",
  "262,585 265,675", "190,570 215,572 235,587 262,585", "187,577 180,615 185,675", "57,580 90,615 97,597 108,597 108,583 122,577", "90,615 97,640 88,675",
  "590,655 500,635", "805,565 815,675",
];
const westAreas: Area[] = [
  [L, "284,68 357,73 355,122 278,116 283,95"], [M, "183,260 270,275 265,310 250,355 163,335 168,310"],
  [L, "643,142 708,128 706,160 690,185 682,203 660,205 638,195"], [L, "571,397 640,385 648,410 662,425 675,430 672,445 650,468 600,465 574,470"],
  [M, "705,342 742,334 752,400 760,450 710,452 718,400"], [L, "757,408 800,403 802,420 832,420 838,460 848,500 845,540 820,560 805,560 800,520 768,525 760,450"],
  [L, "668,470 685,455 712,452 695,480 700,525 672,535 655,520 650,500"], [M, "650,475 665,475 662,500 650,515 668,535 648,560 645,583 607,580 605,540 620,525 635,510"],
  [L, "574,470 604,470 650,468 640,490 628,520 606,525 608,510 598,490"], [M, "540,548 605,562 603,610 590,655 490,623 510,590 525,580"],
  [M, "668,538 718,532 722,583 675,605 657,615 648,590 648,565"], [L, "720,532 800,520 805,560 790,590 725,583"],
  [D, "650,617 675,605 705,590 745,585 750,652 705,658 705,675 680,675 675,650 655,635"],
  [L, "607,580 645,583 657,615 655,635 675,650 680,675 590,675 590,655 603,610"], [L, "747,590 790,592 805,565 815,640 750,655"],
  [L, "812,565 840,560 850,535 868,530 893,520 925,512 900,545 898,592 885,600 865,590 812,590"],
];
const midLines = [
  "140,68 145,110 130,130 115,150 112,168 83,170", "145,110 165,115 175,125 177,143 215,140 222,160 210,185 208,210 203,228",
  "177,143 175,170 150,180 152,210 145,232 160,257", "86,180 86,228 142,230", "255,73 253,157 222,160", "253,157 275,158 290,175 303,180",
  "240,160 245,185 243,205 265,240 272,270 262,288", "345,77 341,157", "365,182 383,180 425,155", "400,79 408,95 427,115 427,150",
  "485,83 487,150 558,170 550,250 530,245", "569,86 565,140 580,150 600,157 610,138 645,125", "565,145 580,170 595,195 597,232 578,235 573,255 550,250",
  "635,95 645,88 640,115 655,135 680,138 705,120 700,95 690,90", "675,140 677,165 672,210 597,200", "705,130 755,125 757,95",
  "597,232 640,232 660,210 685,208", "640,232 652,245 650,262 680,275 715,250", "650,262 632,298 670,310", "573,255 578,298 638,318 635,355",
  "578,298 568,345 635,360", "750,222 775,215 800,225 803,245 795,265 770,272 742,265 745,240", "638,318 650,307 690,312 690,325 688,365 662,372",
  "690,325 722,333", "688,365 705,358 715,337", "203,228 262,288 190,350 240,402 323,345 262,288 327,235 385,285 378,300 357,325 323,345",
  "203,228 133,292 133,325 115,370 113,410", "190,350 180,372 145,375 135,390 133,410 140,455 205,450 240,402 300,450 350,447",
  "323,345 307,367", "250,402 307,367 335,440 395,415", "357,325 405,367", "383,290 430,257 447,265 445,290 453,325 445,343",
  "524,298 520,370 450,365", "491,430 495,385 520,375 550,375", "300,450 315,565", "350,447 370,560", "358,476 412,475", "205,450 185,450 182,490 155,515",
  "182,490 190,470 208,460 230,470 248,490 240,520 230,540", "230,470 250,458 300,452", "250,522 300,522", "232,540 245,520 275,528 285,548 275,588 255,590 232,575 232,540",
  "230,588 310,578 385,562", "310,570 300,620 298,675", "235,588 235,650 140,650 142,580 150,545 185,505 205,510 225,545 228,588 205,590 142,570",
  "140,650 140,675", "195,650 195,675", "235,650 236,675", "60,592 68,675", "330,665 395,650", "445,593 500,575 518,570 537,605 535,655 485,660 460,645",
  "568,345 615,378 600,395 550,405", "610,450 655,490 675,488 683,430", "785,370 830,365 835,425 810,440 785,440", "730,515 745,495 780,495 785,520 770,545 750,550",
  "575,530 595,530 605,550 632,585 620,625 605,615 580,580", "610,640 680,640", "625,600 665,645 670,635 625,600", "610,640 610,675",
  "740,570 775,555 798,580 770,615 755,605", "785,510 850,500 845,540 795,540 785,510", "760,615 820,605 822,655 770,655", "537,650 540,675",
  "765,355 790,330 825,310 830,350 810,368 775,365 765,355", "88,450 112,420 133,410", "113,340 125,340",
];
const midAreas: Area[] = [
  [L, "303,180 315,165 341,157 365,182 380,180 375,200 348,242 320,228 320,212 308,205"], [M, "427,150 483,150 488,213 500,225 460,228 425,232"],
  [M, "440,232 500,228 505,208 515,215 520,235 530,250 517,295 447,287 440,262"], [L, "757,95 815,92 835,60 850,50 845,100 825,125 800,122 770,130 757,125"],
  [D, "755,135 800,125 825,125 828,140 820,170 800,168 780,168 760,150"], [M, "733,140 755,135 760,150 780,165 805,172 790,215 750,222"],
  [L, "677,165 733,137 750,222 745,240 718,247 685,210"], [M, "805,178 865,195 868,240 850,260 800,235 790,215"], [L, "830,130 895,165 890,210 822,180"],
  [L, "718,247 742,250 748,272 722,333 677,310 680,295"], [L, "748,272 795,268 830,310 765,355 722,333"], [L, "803,253 850,260 852,285 830,305 800,300 797,270"],
  [L, "383,395 445,340 465,430 412,472 393,445 395,415"], [D, "412,472 473,423 490,450 502,510 468,540 440,520 425,520"],
  [L, "293,660 305,640 328,645 330,675 285,675"], [L, "387,562 405,560 420,575 450,590 460,620 445,650 400,658"],
  [L, "405,555 420,535 440,525 468,540 460,560 435,590 415,580"], [L, "468,540 512,518 518,555 445,593"], [L, "495,445 540,432 555,470 540,513 512,515 502,508"],
  [L, "512,515 570,508 575,575 520,580"], [L, "545,408 570,400 600,430 615,455 575,470 555,460 540,430"], [L, "555,490 615,455 635,485 615,500 605,520 570,525 565,505"],
  [L, "520,370 540,340 560,335 565,350 550,375"], [L, "602,380 615,358 688,372 688,388 605,400"], [M, "590,408 688,388 683,430 645,435 610,450"],
  [M, "683,415 750,425 745,495 678,470"], [M, "742,470 765,445 780,440 795,480 805,508 745,495"], [L, "720,335 765,355 750,400 750,425 685,412 688,390"],
  [L, "765,365 785,370 785,440 755,445 750,400"], [L, "605,520 620,490 650,492 695,515 710,530 680,560 640,565 608,545"], [L, "655,490 675,475 730,495 730,515 695,520"],
  [L, "680,560 710,530 735,520 750,550 720,580 690,590"], [L, "632,580 655,562 685,570 685,615 660,615 640,600"], [L, "540,585 575,585 605,630 560,650 537,640"],
  [L, "685,615 710,612 705,675 670,675"], [L, "710,612 750,610 765,675 705,675"], [L, "690,590 740,570 755,610 690,612"],
  [L, "780,540 828,540 825,600 790,598 798,575"], [L, "850,540 885,590 820,650 825,600 830,570"], [L, "885,590 920,590 920,675 820,675 822,645"],
  [L, "795,475 845,440 880,470 870,490 810,490"],
];
const eastAreas: Area[] = [
  [M, "182,175 195,168 215,168 230,172 228,125 240,108 265,98 310,108 318,90 350,100 340,130 320,175 275,175 262,190 225,192 215,212 190,230"],
  [D, "225,195 262,190 260,230 228,225"], [L, "182,178 188,240 165,250 155,212"], [L, "188,240 215,213 228,225 260,230 300,300 262,305 240,290 225,330 165,290 170,252"],
  [L, "262,185 275,175 330,265 315,298 290,295 260,235"], [L, "355,70 380,45 412,38 418,75 400,92 365,95"], [N, "318,90 330,62 355,65 365,95 350,100"],
  [N, "412,38 440,42 460,60 478,50 482,85 445,95 418,78"], [L, "400,92 418,82 450,110 405,125"], [N, "350,100 365,95 400,105 405,125 375,155 342,135"],
  [N, "405,125 445,105 475,115 475,150 405,165 378,160"], [N, "342,135 378,160 330,182 320,175"], [N, "330,182 378,160 405,168 370,215"],
  [N, "405,175 475,150 475,180 380,230 370,215"], [N, "275,175 320,178 380,235 375,265 335,268"], [L, "380,235 470,180 475,210 515,235 490,255 460,262 420,250"],
  [N, "380,240 410,245 415,275 390,300 370,300 375,265"], [N, "335,268 370,275 370,325 330,320 315,298"], [N, "410,285 420,250 480,265 485,303"], [N, "485,250 515,235 535,260 525,300 485,303"],
  [L, "525,270 540,250 570,250 575,310 550,325 525,295"], [L, "575,250 600,220 600,280 580,300 570,270"], [L, "355,330 385,300 412,310 412,345"],
  [M, "412,310 485,312 492,330 460,345 415,345"], [M, "333,330 410,350 435,360 425,400 395,405 360,380 340,350"], [D, "352,388 395,393 405,415 370,445 362,410"],
  [L, "315,380 355,390 372,445 355,460 325,420"], [N, "305,330 333,335 350,385 315,375"], [L, "215,335 240,290 262,305 258,370 230,380 208,355"],
  [L, "262,305 315,300 330,325 290,345 262,335"], [M, "220,430 240,380 268,373 275,415 245,430"], [L, "222,440 275,418 270,450 225,452"],
  [L, "275,385 300,395 300,445 275,450"], [L, "300,400 325,415 335,445 300,455"], [L, "262,335 300,345 300,390 268,378"], [L, "170,410 200,405 228,450 200,475 175,460"],
  [L, "165,375 200,380 190,410 150,425 138,395"], [M, "165,475 195,470 215,485 215,510 180,525 162,500"], [M, "220,462 250,450 265,480 240,485"], [M, "265,475 275,445 300,450 310,495 275,485"],
  [M, "305,455 330,450 335,475 310,490"], [M, "335,455 360,460 365,490 340,490"], [D, "250,490 295,485 305,520 290,530 250,510"], [L, "220,480 248,485 250,510 218,505"],
  [M, "205,520 240,505 255,515 230,525"], [D, "178,545 205,520 225,522 240,550 240,580 220,590 190,565"], [Y, "237,535 245,520 270,515 275,530 245,548"],
  [Y, "230,592 255,580 280,560 285,535 305,520 303,500 330,505 345,492 360,495 355,515 358,530 335,520 322,518 325,540 330,560 325,590 300,610 280,620 262,642 255,620"],
  [M, "235,562 275,532 280,545 262,580 235,578"], [L, "135,595 200,555 235,595 190,620 135,600"], [L, "200,610 230,595 258,645 240,660 190,650"],
  [L, "262,650 275,630 310,605 325,640 295,660"], [D, "293,662 320,640 325,600 345,580 350,610 370,630 385,615 380,635 330,660"],
  [M, "325,660 375,640 370,700 335,700"], [M, "375,640 410,630 410,705 372,725"], [L, "410,625 450,620 470,670 412,710"], [L, "262,650 290,665 325,665 335,720 300,715"],
  [N, "335,700 370,702 370,730 330,760 312,730"], [N, "455,630 500,615 530,640 500,665 470,670"], [L, "470,675 525,638 550,660 550,700 510,680"],
  [N, "430,710 450,680 500,680 520,700 505,745 470,745 460,715"], [L, "520,712 550,705 605,775 600,795 530,760 505,745"], [L, "430,715 460,712 478,745 440,770"],
  [L, "370,730 412,710 430,715 440,770 440,795 370,795"], [D, "305,765 355,742 370,770 368,795 305,795"], [L, "440,770 505,740 530,760 525,795 440,795"],
  [L, "165,690 190,670 200,700 235,715 255,700 260,740 310,720 330,745 265,795 155,795"], [L, "255,700 262,650 312,712 260,740"],
];
const eastLines = ["155,212 165,195 182,175", "200,690 210,665 235,660 260,690", "228,125 232,140 270,175", "600,215 600,260 635,270 625,240 612,240 612,225 600,215", "195,720 235,708 262,735 262,795", "370,745 395,725 405,795"];
const coast = [
  "470,90 480,120 475,150 480,180 470,200 490,210", "480,50 482,100 490,150 500,190 508,205", "470,210 500,215 520,235 515,265 530,245 560,260 572,275 570,250 600,215",
  "640,265 605,262 600,300 580,300 570,320 550,325", "550,322 520,325 490,340 440,350", "405,340 420,355 440,350 430,375 440,390 465,378 440,410", "395,410 430,425 400,430",
  "355,455 370,440 400,435 398,465 420,465", "300,495 325,500 345,490 385,530 360,535 340,520", "270,480 280,490 300,500 330,520 320,545 330,570", "330,580 345,560 355,590 385,620 375,630",
  "385,570 410,580 435,570 440,600 400,610 390,590", "370,620 400,625 440,615 460,620 480,610 520,630", "500,620 530,650 548,665 545,700 560,715 565,745 575,755", "575,730 600,770 603,788",
  "340,560 380,553", "400,555 410,552", "425,545 440,540", "490,365 500,350", "430,540 445,520",
];
const thickCoast = [
  "472,95 474,118 482,150 478,175 484,200 476,212", "505,228 522,245 512,262 528,250 545,262 562,270 570,282", "404,338 418,350 432,345 440,360 428,372",
  "376,560 388,548 396,556", "372,618 384,628 402,620 416,626", "452,612 470,622 484,610 502,622 516,632", "552,706 562,722 566,742", "560,255 574,240 584,262 574,285",
];

function rough(points: string, amp: number): string {
  const p = points.split(" ").map((s) => s.split(",").map(Number));
  let seed = Math.round(p[0][0] * 31 + p[0][1] * 17) + 7;
  const rnd = () => {
    seed = (seed * 1103515245 + 12345) % 2147483648;
    return seed / 2147483648 - 0.5;
  };
  const out: string[] = [];
  for (let i = 0; i < p.length - 1; i++) {
    const [a, b] = p[i];
    const [c, d] = p[i + 1];
    const n = Math.max(1, Math.round(Math.hypot(c - a, d - b) / 6));
    for (let k = 0; k < n; k++) {
      const t = k / n;
      out.push(`${(a + (c - a) * t + rnd() * amp).toFixed(1)},${(b + (d - b) * t + rnd() * amp).toFixed(1)}`);
    }
  }
  out.push(p[p.length - 1].join(","));
  return out.join(" ");
}

function MapBody() {
  const poly = (a: Area[]) => a.map(([f, p], i) => <polygon key={i} points={p} fill={f} />);
  const line = (a: string[]) => a.map((p, i) => <polyline key={i} points={rough(p, 1)} fill="none" />);
  return (
    <g stroke="#000" strokeWidth="3.100" strokeLinejoin="round">
      <g transform="translate(370 290) scale(.333333)">
        <polygon stroke="none" fill={N} points="218,34 802,65 1565,92 1700,200 1800,300 1770,480 1790,620 1900,800 42,800 42,672 38,640 95,450 190,139" />
        <polygon stroke="none" fill={L} points="1590,60 1640,100 1700,180 1740,280 1770,370 1730,470 1740,550 1590,610 1500,660 1500,240 1570,140" />
        {line(westLines)}
        {poly(westAreas)}
      </g>
      <g transform="translate(620 290) scale(.333333)">
        {line(midLines)}
        <g strokeWidth="2.700">{poly(midAreas)}</g>
      </g>
      <g transform="translate(840 250) scale(.333333)">
        <g strokeWidth="2.500">{poly(eastAreas)}</g>
        {line(eastLines)}
        <g strokeWidth="4.200">
          {coast.map((p, i) => <polyline key={i} points={rough(p, 13)} fill="none" />)}
        </g>
        <g strokeWidth="5">
          {thickCoast.map((p, i) => <polyline key={i} points={rough(p, 16)} fill="none" />)}
        </g>
      </g>
      <path d="M1133 514c5-6 14-7 24-4l7 3" fill="#fff" strokeWidth="1.200" />
    </g>
  );
}

/* ---------- attribute table ---------- */

const cols = ["TOWN_ID", "TOWN", "FIPS_STCO", "POP1980", "POP1990", "POP2000", "POPCH80_90", "POPCH90_00", "FOURCOLOR", "TYPE"];
const rows: string[][] = [
  ["49", "35", "BOSTON", "25025", "570719", "574283", "588957", "3564", "14674", "1", "C"],
  ["348", "348", "WORCESTER", "25027", "159843", "169759", "172648", "9916", "2889", "3", "C"],
  ["300", "281", "SPRINGFIELD", "25013", "150454", "156983", "152082", "6529", "-4901", "3", "C"],
  ["200", "201", "NEW BEDFORD", "25005", "97738", "99922", "93768", "2184", "-6154", "2", "C"],
  ["52", "44", "BROCKTON", "25023", "95892", "92788", "94304", "-3104", "1516", "1", "C"],
  ["173", "160", "LOWELL", "25017", "93473", "103439", "105167", "9966", "1728", "4", "C"],
  ["68", "49", "CAMBRIDGE", "25017", "92535", "95802", "101355", "3267", "5553", "3", "C"],
  ["106", "95", "FALL RIVER", "25005", "92038", "92703", "91938", "665", "-765", "3", "C"],
  ["222", "243", "QUINCY", "25021", "83682", "84985", "88025", "1303", "3040", "3", "C"],
  ["276", "207", "NEWTON", "25017", "82297", "82585", "83829", "288", "1244", "3", "C"],
  ["160", "163", "LYNN", "25009", "79264", "81245", "89050", "1981", "7805", "3", "C"],
  ["251", "274", "SOMERVILLE", "25017", "75836", "76210", "77478", "374", "1268", "4", "C"],
  ["", "100", "FRAMINGHAM", "25017", "64944", "64989", "66910", "145", "1921", "4", "T"],
];
const FACE = "[font-family:'Noto_Sans','Open_Sans',sans-serif] text-[12px] leading-[16px] whitespace-pre";

function Btn({ children }: { children: React.ReactNode }) {
  return <div className="mr-[6px] flex h-[27px] w-[28px] shrink-0 items-center justify-center rounded-[3px] border border-[#9a9a9a] bg-gradient-to-b from-[#fcfcfc] to-[#ececec]">{children}</div>;
}
const VSep = ({ c }: { c: string }) => <div className={`${c} h-[27px] w-px shrink-0 bg-[#aaa]`} />;

function WinButtons({ red = false }: { red?: boolean }) {
  const base = red ? "border-[#51677f] bg-gradient-to-b from-[#d3e3f3] via-[#9fb7d0] to-[#bdd3e8]" : "border-[#8d9a9d] bg-[#eef9f9]/70";
  return (
    <div className={`${base} flex h-[19px] overflow-hidden rounded-b-[4px] border border-t-0`}>
      <div className="flex w-[28px] items-center justify-center border-r border-inherit pt-[5px]"><div className="h-[5px] w-[12px] rounded-[1px] border border-[#555] bg-white" /></div>
      <div className="flex w-[27px] items-center justify-center border-r border-inherit"><div className="flex h-[10px] w-[12px] items-center justify-center rounded-[1px] border border-[#555] bg-white"><div className="h-[4px] w-[6px] border border-[#555]" /></div></div>
      <div className={red ? "flex w-[47px] items-center justify-center bg-gradient-to-b from-[#e6a193] via-[#c0402a] to-[#d4694d]" : "flex w-[47px] items-center justify-center"}>
        <svg width="12" height="11" viewBox="0 0 12 11"><path d="M2 1l8 9M10 1l-8 9" stroke="#4a4d5c" strokeWidth="4.500" /><path d="M2.500 1.500l7 8M9.500 1.500l-7 8" stroke="#fff" strokeWidth="2.300" /></svg>
      </div>
    </div>
  );
}

function AttributeTable() {
  return (
    <div className="absolute top-[512px] left-[8px] flex h-[381px] w-[1229px] flex-col overflow-hidden rounded-[8px] border-2 border-[#15191f] bg-[#bcd8f3] shadow-[0_0_14px_3px_rgba(0,0,0,0.55)]">
      <svg className="absolute top-0 left-0" width="1226" height="30">
        <defs>
          <filter id="haze" x="-5%" y="-50%" width="110%" height="200%"><feGaussianBlur stdDeviation="3.500" /></filter>
          <filter id="soft"><feGaussianBlur stdDeviation="2" /></filter>
          <clipPath id="landstrip"><path d="M545 0H1226V30H1010L860 26 780 26 770 20 700 20 690 12 545 12z" /></clipPath>
          <linearGradient id="glass" x1="0" x2="1" y1="0" y2="0">
            <stop offset="0" stopColor="#c4dcf5" /><stop offset=".3" stopColor="#b0d1f2" /><stop offset="1" stopColor="#bfdffc" />
          </linearGradient>
        </defs>
        <rect width="1226" height="30" fill="url(#glass)" />
        <g clipPath="url(#landstrip)">
          <path d="M545 0h490l10 14-12 12-160 4-80-4-20-8-70-2-10-6H545z" fill="#76a3d2" filter="url(#haze)" opacity=".8" />
          <g opacity=".38" filter="url(#soft)"><g transform="translate(-10 514) scale(1 -1)"><MapBody /></g></g>
          <path d="M545 0h490v26H545z" fill="#5e92cb" filter="url(#haze)" opacity=".25" />
        </g>
        <rect x="20" y="5" width="530" height="16" fill="#fff" opacity=".35" filter="url(#haze)" />
        <path d="M0 .5H1226" stroke="#eaf5ff" />
      </svg>
      <div className="relative flex h-[27px] shrink-0 items-start pl-[7px]">
        <div className="flex h-[24px] items-center">
          <Logo />
          <span className={`${FACE} ml-[6px] tracking-[-0.24px]`}>Attribute table - massgis:GISDATA.TOWNS_POLYM :: Features total: 351, filtered: 351, selected: 1</span>
        </div>
        <div className="ml-auto mr-[3px]"><WinButtons red /></div>
      </div>
      <div className="relative mr-[4px] ml-[5px] flex h-[344px] shrink-0 flex-col border border-[#4c6078] bg-[#f0f0f0]">
        <div className="flex h-[37px] shrink-0 items-start pt-[2px] pl-[2px]">
          <Btn><Ic dim size={20}><Pencil /></Ic></Btn>
          <Btn><Ic dim size={20}><Floppy /><path d="M13 23l1-5 7-8 3 3-7 8z" fill="#ccc" stroke="#666" /></Ic></Btn>
          <VSep c="mr-[9px] ml-[1px]" />
          <Btn><Ic dim size={20}><Dotted x={2} y={4} s={12} f="#ccc" c="#666" /><Cross /></Ic></Btn>
          <VSep c="mr-[9px] ml-[1px]" />
          <Btn><Ic size={18}><Eps /><Dotted x={11} y={11} s={12} /></Ic></Btn>
          <Btn><Ic size={18}><Dotted x={1} y={2} s={15} /><Deny /></Ic></Btn>
          <Btn><Ic size={18}><path d="M2 2h20v14H2z" fill="#d3dee8" stroke="#8a99a8" /><path d="M4 6h16M4 9h16M4 12h16" stroke="#8a99a8" /><path d="M10.500 15V9H7l5-7 5 7h-3.500v6z" fill="#3f6f9f" /><path d="M2 17h20v5H2z" fill="#fbe74c" stroke="#b19b14" /></Ic></Btn>
          <Btn><Ic size={18}><path d="M1 1h22v22H1z" fill="#eee28d" /><path d="M3 10C4 3 12 1 17 5l4-3v9h-9l3-3c-4-2-6 0-7 3zM21 14c-1 8-9 9-14 6l-4 3v-9h9l-3 3c4 2 7 0 7-4z" fill="#79ad79" stroke="#4b8250" /></Ic></Btn>
          <Btn><Ic size={19}><Dotted x={1} y={1} s={14} c="#222" /><Arrows4 cx={12.500} cy={12.500} /></Ic></Btn>
          <Btn><Ic size={20}><Dotted x={2} y={3} s={12} c="#b19b14" /><Mag fill="#f0ecd0" /></Ic></Btn>
          <Btn><Ic size={16}><path d="M12 2h7l3 4v12H12z" fill="#f2dc6d" stroke="#b8a040" /><path d="M3 5h8l4 4v13H3z" fill="#fff" stroke="#888" /><path d="M5 11h8M5 14h8M5 17h8" stroke="#999" /></Ic></Btn>
          <VSep c="mr-[9px] ml-[1px]" />
          <Btn><Ic dim size={18}><TableGlyph c="#888" /><Cross /></Ic></Btn>
          <Btn><Ic dim size={18}><TableGlyph c="#888" /><Star /></Ic></Btn>
          <Btn><Ic dim size={20}><Abacus /></Ic></Btn>
          <div className={`${UI} ml-auto mr-[3px] mt-[2px] flex h-[22px] w-[21px] items-center justify-center rounded-[3px] border border-[#9a9a9a] bg-[#f9f9f9]`}>?</div>
        </div>
        <div className="mr-px flex h-[271px] shrink-0 border-2 border-[#4c9ff0] bg-white">
          <div className="flex-1 overflow-hidden">
            <div className="flex h-[22px] bg-[#f0f0f0]">
              <div className="h-[22px] w-[28px] shrink-0 border-r-2 border-b border-[#8f8f8f] bg-[#f4f4f4]" />
              {cols.map((c) => (
                <div key={c} className={`${FACE} relative flex h-[22px] w-[100px] shrink-0 items-center justify-center border-r-2 border-b border-[#8f8f8f] bg-gradient-to-b from-[#fafafa] to-[#e6e6e6] pl-px tracking-[-0.5px] ${c === "POP1980" ? "pr-[18px]" : ""}`}>
                  {c}
                  {c === "POP1980" && <svg className="absolute top-[4px] right-[5px]" width="13" height="12" fill="none"><path d="M12.500.5L6.500 11" stroke="#fff" /><path d="M12.500.5H.5L6.500 11" stroke="#aaa" /></svg>}
                </div>
              ))}
            </div>
            {rows.map((r, i) => (
              <div key={i} className="flex h-[20px]">
                <div className={`${FACE} h-[20px] w-[28px] shrink-0 border-r-2 border-b-2 border-[#8f8f8f] bg-gradient-to-b from-[#fafafa] to-[#e8e8e8] pt-[2px] pl-[2px] tracking-[-0.8px]`}>{r[0]}</div>
                {r.slice(1).map((v, j) => {
                  const right = j >= 2 && j <= 7;
                  const bg = i === 0 ? "bg-[#3399ff] text-white" : i % 2 ? "bg-[#f6f6f6]" : "bg-white";
                  const ring = i === 0 && j === 0 ? "outline-2 -outline-offset-2 outline-[#12e67c]" : "";
                  const track = j === 1 ? "tracking-[-0.4px]" : "tracking-[-0.8px]";
                  const pad = right ? "pr-[3px] text-right" : j === 0 ? "pl-[2px]" : "pl-[3px]";
                  return (
                    <div key={j} className={`${FACE} ${bg} ${ring} ${track} ${pad} h-[20px] w-[100px] shrink-0 border-r border-b border-[#a0a0a0]`}>{v}</div>
                  );
                })}
              </div>
            ))}
          </div>
          <div className="flex w-[16px] shrink-0 flex-col bg-[#ececec] pb-px">
            <div className="flex h-[15px] items-center justify-center rounded-[2px] border border-[#999] bg-[#fafafa]"><svg width="7" height="4"><path d="M0 4h7L3.500 0z" /></svg></div>
            <div className="h-[26px] rounded-[2px] border border-[#999] bg-gradient-to-r from-white to-[#e4e4e4]" />
            <div className="flex-1" />
            <div className="flex h-[16px] items-center justify-center rounded-[2px] border border-[#999] bg-[#fafafa]"><svg width="7" height="4"><path d="M0 4h7L3.500 0z" /></svg></div>
            <div className="flex h-[16px] items-center justify-center rounded-[2px] border border-[#999] bg-[#fafafa]"><svg width="7" height="4"><path d="M0 0h7L3.500 4z" /></svg></div>
          </div>
        </div>
        <div className="flex flex-1 items-start pt-[6px] pl-[2px]">
          <div className="flex h-[25px] w-[122px] items-center rounded-[3px] border border-[#888] bg-gradient-to-b from-[#fcfcfc] to-[#ececec] pl-[6px]">
            <svg width="14" height="14"><rect width="14" height="14" rx="2" fill="#a6a6a6" /><path d="M2 1h10L8.500 6v7h-3V6z" fill="#f5f5f5" /></svg>
            <span className={`${UI} ml-[4px]`}>Show All Features</span>
            <svg width="5" height="3" className="mt-[13px]"><path d="M0 0h5L2.500 3z" /></svg>
          </div>
          <div className="ml-auto flex h-[25px] w-[26px] items-center justify-center rounded-[3px] border border-[#888] bg-[#f9f9f9]">
            <svg width="16" height="15"><rect x=".5" y=".5" width="15" height="14" fill="#eef5ff" stroke="#6f9fe0" /><path d="M0 2h16" stroke="#1f55cc" strokeWidth="4" /><path d="M3 7h2M3 10h2" stroke="#2f66dd" strokeWidth="2" /><path d="M6 7h7M6 10h7" stroke="#111" strokeWidth="1.500" /></svg>
          </div>
          <div className="mr-[2px] flex h-[25px] w-[26px] items-center justify-center rounded-[3px] border border-[#888] bg-[#d8d8d8]"><Ic size={16}><TableGlyph c="#6f8ea6" /></Ic></div>
        </div>
      </div>
    </div>
  );
}

const menus: [string, string][] = [
  ["Project", "w-[49px]"], ["Edit", "w-[34px]"], ["View", "w-[36px]"], ["Layer", "w-[42px]"], ["Settings", "w-[54px]"], ["Plugins", "w-[48px]"],
  ["Vector", "w-[45px]"], ["Raster", "w-[47px]"], ["Database", "w-[61px]"], ["Processing", "w-[66px]"], ["Help", "w-[40px]"],
];

export default function App() {
  return (
    <div className="relative flex h-[894px] w-[1238px] flex-col overflow-hidden rounded-t-[6px] border-t-2 border-l border-[#596164] bg-gradient-to-b from-[#e6f8f9] to-[#c5d4d6] text-black">
      <div className="flex h-[27px] shrink-0 items-start bg-gradient-to-r from-[#dfeeee] via-[#f4ffff] to-[#e6f6f6] pl-[8px]">
        <div className="flex h-[25px] items-center">
          <Logo />
          <span className={`${FACE} ml-[6px] tracking-[-0.3px]`}>QGIS 2.0.1-Dufour</span>
        </div>
        <div className="ml-[235px] mt-[7px] h-[7px] w-[38px] bg-[#8fb4ec] opacity-70 blur-[3px]" />
        <div className="ml-auto mr-[54px] mt-[7px] h-[7px] w-[46px] bg-[#7ea3ea] opacity-70 blur-[3px]" />
        <div className="mr-[5px]"><WinButtons /></div>
      </div>
      <div className="mr-[7px] ml-[6px] flex min-h-0 flex-1 flex-col border border-[#6f7777] bg-[#f0f0f0]">
        <div className="flex h-[23px] shrink-0 items-center border-b border-[#b4b4b4] pt-[2px] pl-[9px]">
          {menus.map(([m, w]) => <span key={m} className={`${UI} ${w} shrink-0`}>{m}</span>)}
        </div>
        <Toolbar1 />
        <Toolbar2 />
        <Toolbar3 />
        <div className="flex min-h-0 flex-1 items-stretch">
          <SideBar />
          <Docks />
          <div className="mt-px ml-[3px] flex-1 border-t-2 border-l-2 border-[#b8b8b8] bg-white">
            <svg width="867" height="360" viewBox="362 172 867 360"><MapBody /></svg>
          </div>
        </div>
      </div>
      <AttributeTable />
    </div>
  );
}
